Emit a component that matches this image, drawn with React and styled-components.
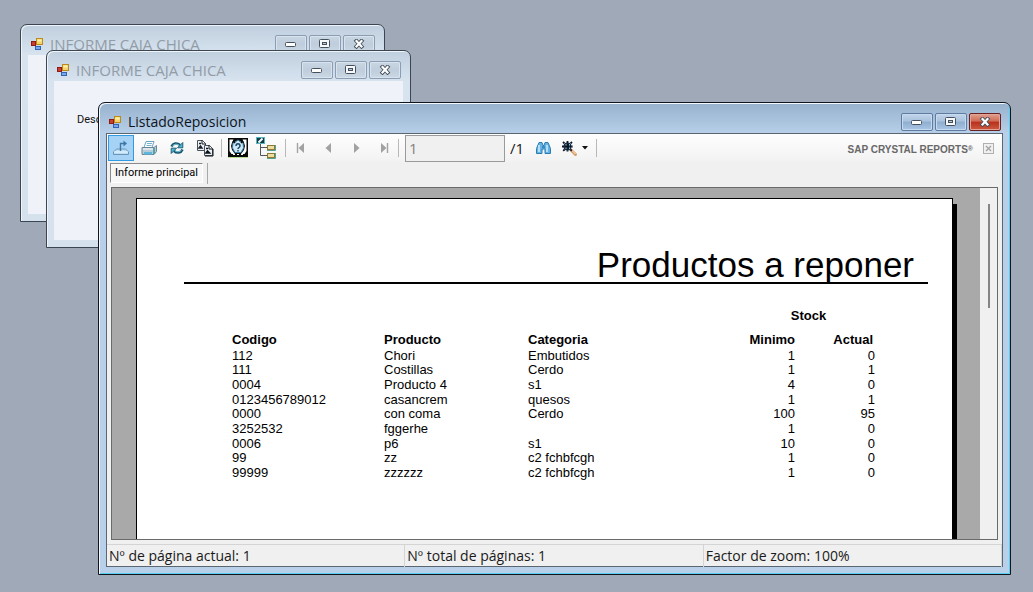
import React from "react";
import styled, { createGlobalStyle, css } from "styled-components";

const GlobalStyle = createGlobalStyle`
  * { box-sizing: border-box; }
  body { margin: 0; background: #a0a9b8; }
`;

const ui = `"Open Sans", "Noto Sans", sans-serif`;
const arial = `"Liberation Sans", Arial, sans-serif`;

const Desktop = styled.main`
  position: relative;
  min-height: 100vh;
  overflow: hidden;
  background: #a0a9b8;
  font-family: ${ui};
  color: #1a1a1a;
`;

const Frame = styled.section`
  position: absolute;
  display: flex;
  flex-direction: column;
  padding: 0 7px 7px;
  border: 1px solid #3c4652;
  border-radius: 7px 7px 0 0;
  background: linear-gradient(#c0cfde, #d7e3ef 30px, #d5e2ee);
  box-shadow: inset 1px 1px 0 #eef4fa;
  ${(p) =>
    p.$active &&
    css`
      border-color: #10161e;
      background: linear-gradient(#97b1cd, #b7cfe8 30px, #b9d0ea);
      box-shadow: inset 1px 1px 0 #f4f9ff, inset -1px -1px 0 #55d0f0;
    `}
`;

const BackFrame = styled(Frame)`
  left: 20px;
  top: 24px;
  width: 365px;
  height: 198px;
`;

const MiddleFrame = styled(Frame)`
  left: 46px;
  top: 50px;
  width: 365px;
  height: 198px;
`;

const ReportFrame = styled(Frame)`
  left: 98px;
  right: 22px;
  top: 102px;
  bottom: 17px;
`;

const TitleBar = styled.header`
  display: flex;
  align-items: center;
  flex: none;
  height: 30px;
  padding: 7px 2px 0;
  gap: 5px;
`;

const Title = styled.h1`
  flex: 1;
  margin: 0;
  font-size: ${(p) => (p.$active ? 14 : 15)}px;
  line-height: 20px;
  font-weight: 400;
  color: ${(p) => (p.$active ? "#0c1420" : "#929ca6")};
`;

const Controls = styled.div`
  display: flex;
  gap: 2px;
`;

const ControlButton = styled.button`
  display: grid;
  place-items: center;
  width: 32px;
  height: 18px;
  padding: 0;
  border: 1px solid #8b9db2;
  border-radius: 2px;
  background: linear-gradient(#c9d6e3, #bfcddc 50%, #cbd8e5);
  box-shadow: inset 0 0 0 1px #d8e3ed;
  ${(p) =>
    p.$active &&
    css`
      border-color: #5f7ba0;
      background: linear-gradient(#c3d5ea, #a9c2de 45%, #8fadd0 50%, #a9c6e6);
      box-shadow: inset 0 0 0 1px #c6daf0;
    `}
  ${(p) =>
    p.$danger &&
    css`
      border-color: #6b2020;
      background: linear-gradient(#e0a090, #cf6a55 45%, #b8301c 50%, #cf5a40);
      box-shadow: inset 0 0 0 1px #e0a498;
    `}
`;

const Client = styled.div`
  flex: 1;
  padding: 32px 23px;
  background: #eff3f9;
`;

const FieldLabel = styled.p`
  margin: 0;
  font: 11px/14px Roboto, sans-serif;
  color: #111;
`;

const Report = styled.div`
  flex: 1;
  display: flex;
  flex-direction: column;
  min-height: 0;
  border: 1px solid #5c6670;
  background: #f0f0f0;
`;

const Toolbar = styled.div`
  display: flex;
  align-items: center;
  flex: none;
  height: 28px;
  padding: 0 8px 0 1px;
  background: linear-gradient(#fefefe, #f2f2f2);
`;

const Group = styled.div`
  display: flex;
  align-items: center;
  gap: ${(p) => p.$gap || 2}px;
`;

const ToolButton = styled.button`
  display: grid;
  place-items: center;
  width: ${(p) => p.$width || 26}px;
  height: 26px;
  padding: 0;
  border: 1px solid ${(p) => (p.$pressed ? "#3399e0" : "transparent")};
  background: ${(p) => (p.$pressed ? "#a6d3f5" : "transparent")};
`;

const Separator = styled.span`
  width: 1px;
  height: 18px;
  margin: 0 ${(p) => p.$gap || 3}px;
  background: #b8b8b8;
`;

const PageInput = styled.input`
  width: 100px;
  height: 27px;
  padding: 0 3px;
  border: 1px solid #9a9a9a;
  border-radius: 0;
  background: #f0f0f0;
  font: 15px/20px ${ui};
  color: #8a8078;
`;

const PageTotal = styled.span`
  padding: 0 6px 0 5px;
  font-size: 15px;
  line-height: 20px;
`;

const Brand = styled.span`
  margin-left: auto;
  font: bold 10px/14px ${arial};
  color: #686868;
  padding-top: 3px;
  sup {
    font-size: 7px;
    line-height: 0;
    vertical-align: 2px;
  }
`;

const CloseView = styled.button`
  display: grid;
  place-items: center;
  width: 11px;
  height: 11px;
  margin-left: 10px;
  padding: 0;
  border: 1px solid #b0b0b0;
  background: #f0f0f0;
`;

const Tabs = styled.div`
  display: flex;
  flex: none;
  height: 25px;
  padding: 1px 3px 3px;
`;

const Tab = styled.button`
  padding: 0 4px;
  margin-right: 4px;
  height: 20px;
  border: 1px solid;
  border-color: #8a8a8a #fff #fff #8a8a8a;
  background: #f7f7f7;
  font: 11px/16px Roboto, sans-serif;
  color: #000;
`;

const TabDivider = styled.span`
  width: 1px;
  background: #a8a8a8;
`;

const Viewer = styled.div`
  flex: 1;
  display: flex;
  min-height: 0;
  margin: 0 4px 4px;
  border: 1px solid #6a6a6a;
  background: #a9a9a9;
  overflow: hidden;
`;

const Sheet = styled.article`
  flex: 1;
  margin: 10px 27px 0 24px;
  padding: 49px 0 0;
  border: 1px solid #000;
  border-bottom: 0;
  background: #fff;
  box-shadow: 4px 6px 0 #000;
  font-family: ${arial};
  color: #000;
`;

const SheetTitle = styled.h2`
  margin: 0 24px 24px 47px;
  padding-right: 14px;
  border-bottom: 2px solid #000;
  font-size: 35px;
  line-height: 34px;
  font-weight: 400;
  text-align: right;
`;

const ScrollTrack = styled.div`
  flex: none;
  width: 17px;
  padding: 16px 0 0 8px;
  background: #f0f0f0;
`;

const ScrollThumb = styled.div`
  width: 2px;
  height: 104px;
  background: #858585;
`;

const TableArea = styled.div`
  margin: 0 77px 0 95px;
`;

const Table = styled.table`
  width: 100%;
  table-layout: fixed;
  border-collapse: collapse;
  font-size: 13px;
  line-height: 14px;
  tbody tr { height: 15px; }
  tbody tr:nth-child(3n + 1) { height: 14px; }
`;

const Col = styled.col`
  width: ${(p) => (p.$width ? `${p.$width}px` : "auto")};
`;

const Th = styled.th`
  height: ${(p) => (p.$group ? 24 : 17)}px;
  padding: 0 ${(p) => (p.$inset ? 2 : 0)}px 0 0;
  line-height: 16px;
  text-align: ${(p) => p.$align || "left"};
  vertical-align: top;
`;

const Td = styled.td`
  padding: 0;
  text-align: ${(p) => p.$align || "left"};
  vertical-align: top;
  white-space: nowrap;
`;

const StatusBar = styled.footer`
  flex: none;
  display: grid;
  grid-template-columns: repeat(3, 1fr);
  height: 22px;
  border-top: 1px solid #d4d4d4;
`;

const StatusCell = styled.span`
  padding: 0 3px 0 2px;
  border-right: 1px solid #d4d4d4;
  font-size: 14px;
  line-height: 22px;
  white-space: nowrap;
`;

const AppIcon = () => (
  <svg width="15" height="15" viewBox="0 0 15 15" aria-hidden="true">
    <rect x="1.500" y="5.500" width="4" height="4" fill="#c8402c" stroke="#8c1c14" />
    <rect x="6.500" y="2.500" width="6" height="6" fill="#f6d268" stroke="#b88a20" />
    <path d="M7.500 3.500h4v2h-4z" fill="#fff0b0" />
    <rect x="5.500" y="10.500" width="5" height="3" fill="#7aa8ec" stroke="#3462b4" />
  </svg>
);

const MinIcon = () => (
  <svg width="12" height="8" aria-hidden="true">
    <rect x="0.500" y="2.500" width="10" height="4" rx="1" fill="#fff" stroke="#46505c" />
  </svg>
);

const MaxIcon = () => (
  <svg width="12" height="10" aria-hidden="true">
    <rect x="0.500" y="0.500" width="10" height="8" rx="1" fill="#f6f9fc" stroke="#46505c" />
    <rect x="3.500" y="3.500" width="4" height="2" fill="#b8c8d8" stroke="#46505c" />
  </svg>
);

const CloseIcon = () => (
  <svg width="13" height="10" viewBox="0 0 13 10" aria-hidden="true">
    <path d="M3.500 2l5 5.500M8.500 2l-5 5.500" stroke="#46505c" strokeWidth="4" strokeLinecap="square" />
    <path d="M3.500 2l5 5.500M8.500 2l-5 5.500" stroke="#fff" strokeWidth="2.200" strokeLinecap="square" />
  </svg>
);

const ExportIcon = () => (
  <svg width="18" height="16" viewBox="0 0 18 16" aria-hidden="true" fill="none">
    <path d="M4.500 9h9l3 3v2.500h-15V12z" fill="#b9dcf4" stroke="#6a94b8" />
    <path d="M2 12h14" stroke="#eef8ff" />
    <path d="M8.500 11V3.500H13" stroke="#3f78a8" strokeWidth="1.400" />
    <path d="M11.500 0.500l3.500 3-3.500 3z" fill="#3f78a8" />
  </svg>
);

const PrintIcon = () => (
  <svg width="17" height="16" viewBox="0 0 17 16" aria-hidden="true">
    <path d="M5 1.500h8l-2 6H3z" fill="#fff" stroke="#6aa6c4" />
    <path d="M6 3.500h5M5.500 5.500h5" stroke="#7ab4d0" />
    <path d="M1 7.500h12l2.500-2v6L13 14.500H1z" fill="#b7cbd8" stroke="#6c8799" />
    <path d="M2 9h10" stroke="#fff" />
    <path d="M3 12h8v2.500H3z" fill="#5fb6dc" />
    <path d="M13 8v6" stroke="#3f9a98" strokeWidth="1.600" />
  </svg>
);

const RefreshIcon = () => (
  <svg width="14" height="14" viewBox="0 0 14 14" aria-hidden="true" fill="none">
    <path d="M1.500 5.500C3 2 7 1.500 10 4" stroke="#14566c" strokeWidth="2.600" />
    <path d="M2.500 5C4 3 7 2.500 9.500 4.500" stroke="#8ad8ea" />
    <path d="M12.800 1.500v5.300H7.500z" fill="#4fb6d0" stroke="#14566c" strokeWidth="0.900" />
    <path d="M12.500 8.500C11 12 7 12.500 4 10" stroke="#14566c" strokeWidth="2.600" />
    <path d="M11.500 9C10 11 7 11.500 4.500 9.500" stroke="#8ad8ea" />
    <path d="M1.200 12.500V7.200h5.300z" fill="#4fb6d0" stroke="#14566c" strokeWidth="0.900" />
  </svg>
);

const CopyIcon = () => (
  <svg width="18" height="18" viewBox="0 0 18 18" aria-hidden="true">
    <path d="M1.500 1.500h5l3 3v7h-8z" fill="#eef2f6" stroke="#48525e" />
    <path d="M6 1v4h4" fill="none" stroke="#182028" />
    <path d="M3 4.500h2M3 9l1.500-2L6 9z" stroke="#182028" strokeWidth="1.400" />
    <path d="M8.500 6.500h5l3 3v7h-8z" fill="#eef2f6" stroke="#48525e" />
    <path d="M13 6v4h4v7H9" fill="none" stroke="#0c1218" />
    <path d="M10 9.500h2M10 14l1.500-2 2 2z" stroke="#0c1218" strokeWidth="1.600" />
  </svg>
);

const ParamIcon = () => (
  <svg width="20" height="20" viewBox="0 0 20 20" aria-hidden="true">
    <rect width="20" height="19" fill="#0a0a0a" />
    <path d="M0 19.500h20" stroke="#b8dc90" />
    <path d="M1.500 1.500h4L4 4.500 3 8l1 4 3 4H3.500L1.500 13zM18.500 1.500h-4L16 4.500 17 8l-1 4-3 4h3.500l2-3z" fill="#fff" />
    <path d="M5 5l3-1.500L10 2l2 1.500L15 5l.5 5L13 14.500H7L4.500 10z" fill="#cfe8f6" stroke="#3c82a8" />
    <path d="M8 8c0-3 4-3 4 0 0 1.500-2 1.500-2 3M10 12v1.500" fill="none" stroke="#1c4868" strokeWidth="1.500" />
    <path d="M5 16.500h10" stroke="#fff" strokeDasharray="2 2" />
    <path d="M5 3l2 2M15 3l-2 2" stroke="#0a0a0a" strokeWidth="1.500" />
  </svg>
);

const TreeIcon = () => (
  <svg width="20" height="22" viewBox="0 0 20 22" aria-hidden="true">
    <path d="M4.500 7v11.500H11M4.500 10.500H11" fill="none" stroke="#50585c" />
    <rect x="0.500" y="0.500" width="8" height="6" fill="#103c48" stroke="#58b4bc" />
    <path d="M2.500 5.500l4-4" stroke="#fff" strokeWidth="2" />
    <rect x="11.500" y="8.500" width="7" height="4" fill="#f0dc9c" stroke="#8a7a38" />
    <rect x="11.500" y="16.500" width="7" height="4" fill="#f0dc9c" stroke="#8a7a38" />
    <path d="M11 13.500h8.500V8M11 21.500h8.500V16" fill="none" stroke="#58a090" />
  </svg>
);

const NavIcon = ({ back, end }) => (
  <svg width="9" height="10" viewBox="0 0 9 10" aria-hidden="true">
    <g transform={back ? "rotate(180 4.500 5)" : undefined}>
      <path d={end ? "M1 0l5.500 5L1 10z" : "M2 0l5.500 5L2 10z"} fill="#a2a2a2" />
      {end && <path d="M7.500 0v10" stroke="#a2a2a2" strokeWidth="1.400" />}
    </g>
  </svg>
);

const BinocularsIcon = () => (
  <svg width="15" height="14" viewBox="0 0 15 14" aria-hidden="true">
    <path d="M3 1.500h3l1 3h1l1-3h3l2.500 6v5H9V8H6v4.500H0.500v-5z" fill="#62b4e4" stroke="#2c7cb4" />
    <path d="M3 4v7M11 4v7" stroke="#d4f0ff" strokeWidth="1.400" />
    <path d="M6 6h3" stroke="#1c5c90" />
  </svg>
);

const ZoomIcon = () => (
  <svg width="17" height="17" viewBox="0 0 17 17" aria-hidden="true" fill="none">
    <path d="M10 10l4.500 4.500" stroke="#d8a068" strokeWidth="3" strokeLinecap="round" />
    <path d="M10.500 10l4 4" stroke="#ffe8c8" />
    <circle cx="6.500" cy="6.500" r="4" fill="#203c5c" />
    <path d="M2 2l9 9M11 2l-9 9M6.500 1v11M1 6.500h11" stroke="#0c1420" strokeWidth="1.800" strokeDasharray="2 .6" />
    <path d="M4.500 4.800h1M8 4.800h1M4.500 8.300h1M8 8.300h1" stroke="#8cc8e8" strokeWidth="1.400" />
  </svg>
);

function WindowHead({ title, active }) {
  return (
    <TitleBar>
      <AppIcon />
      <Title $active={active}>{title}</Title>
      <Controls>
        <ControlButton type="button" aria-label="Minimizar" $active={active}><MinIcon /></ControlButton>
        <ControlButton type="button" aria-label="Maximizar" $active={active}><MaxIcon /></ControlButton>
        <ControlButton type="button" aria-label="Cerrar" $active={active} $danger={active}><CloseIcon /></ControlButton>
      </Controls>
    </TitleBar>
  );
}

const rows = [
  ["112", "Chori", "Embutidos", "1", "0"],
  ["111", "Costillas", "Cerdo", "1", "1"],
  ["0004", "Producto 4", "s1", "4", "0"],
  ["0123456789012", "casancrem", "quesos", "1", "1"],
  ["0000", "con coma", "Cerdo", "100", "95"],
  ["3252532", "fggerhe", "", "1", "0"],
  ["0006", "p6", "s1", "10", "0"],
  ["99", "zz", "c2 fchbfcgh", "1", "0"],
  ["99999", "zzzzzz", "c2 fchbfcgh", "1", "0"],
];

export default function App() {
  return (
    <Desktop>
      <GlobalStyle />
      <BackFrame>
        <WindowHead title="INFORME CAJA CHICA" />
        <Client />
      </BackFrame>
      <MiddleFrame>
        <WindowHead title="INFORME CAJA CHICA" />
        <Client><FieldLabel>Desc</FieldLabel></Client>
      </MiddleFrame>
      <ReportFrame $active>
        <WindowHead title="ListadoReposicion" active />
        <Report>
          <Toolbar>
            <Group>
              <ToolButton type="button" aria-label="Exportar" $pressed><ExportIcon /></ToolButton>
              <ToolButton type="button" aria-label="Imprimir"><PrintIcon /></ToolButton>
              <ToolButton type="button" aria-label="Actualizar"><RefreshIcon /></ToolButton>
              <ToolButton type="button" aria-label="Copiar"><CopyIcon /></ToolButton>
            </Group>
            <Separator />
            <Group>
              <ToolButton type="button" aria-label="Parámetros"><ParamIcon /></ToolButton>
              <ToolButton type="button" aria-label="Árbol de grupos"><TreeIcon /></ToolButton>
            </Group>
            <Separator $gap={6} />
            <Group $gap={12}>
              <ToolButton type="button" aria-label="Primera página" $width={16}><NavIcon back end /></ToolButton>
              <ToolButton type="button" aria-label="Página anterior" $width={16}><NavIcon back /></ToolButton>
              <ToolButton type="button" aria-label="Página siguiente" $width={16}><NavIcon /></ToolButton>
              <ToolButton type="button" aria-label="Última página" $width={16}><NavIcon end /></ToolButton>
            </Group>
            <Separator $gap={6} />
            <PageInput aria-label="Página" defaultValue="1" />
            <PageTotal>/1</PageTotal>
            <ToolButton type="button" aria-label="Buscar"><BinocularsIcon /></ToolButton>
            <ToolButton type="button" aria-label="Zoom"><ZoomIcon /></ToolButton>
            <svg width="6" height="4" aria-hidden="true"><path d="M0 0h6L3 3.500z" fill="#111" /></svg>
            <Separator $gap={8} />
            <Brand>SAP CRYSTAL REPORTS<sup>®</sup></Brand>
            <CloseView type="button" aria-label="Cerrar vista">
              <svg width="7" height="7" aria-hidden="true"><path d="M1 1l5 5M6 1L1 6" stroke="#a0a0a0" strokeWidth="1.200" /></svg>
            </CloseView>
          </Toolbar>
          <Tabs>
            <Tab type="button">Informe principal</Tab>
            <TabDivider />
          </Tabs>
          <Viewer>
            <Sheet>
              <SheetTitle>Productos a reponer</SheetTitle>
              <TableArea>
                <Table>
                  <colgroup>
                    <Col $width={152} />
                    <Col $width={144} />
                    <Col />
                    <Col $width={53} />
                    <Col $width={80} />
                  </colgroup>
                  <thead>
                    <tr>
                      <Td colSpan={3} />
                      <Th colSpan={2} scope="colgroup" $group $align="center">Stock</Th>
                    </tr>
                    <tr>
                      <Th scope="col">Codigo</Th>
                      <Th scope="col">Producto</Th>
                      <Th scope="col">Categoria</Th>
                      <Th scope="col" $align="right">Minimo</Th>
                      <Th scope="col" $align="right" $inset>Actual</Th>
                    </tr>
                  </thead>
                  <tbody>
                    {rows.map((row) => (
                      <tr key={row[0]}>
                        {row.map((cell, i) => (
                          <Td key={i} $align={i > 2 ? "right" : "left"}>{cell}</Td>
                        ))}
                      </tr>
                    ))}
                  </tbody>
                </Table>
              </TableArea>
            </Sheet>
            <ScrollTrack><ScrollThumb /></ScrollTrack>
          </Viewer>
          <StatusBar>
            <StatusCell>Nº de página actual: 1</StatusCell>
            <StatusCell>Nº total de páginas: 1</StatusCell>
            <StatusCell>Factor de zoom: 100%</StatusCell>
          </StatusBar>
        </Report>
      </ReportFrame>
    </Desktop>
  );
}
